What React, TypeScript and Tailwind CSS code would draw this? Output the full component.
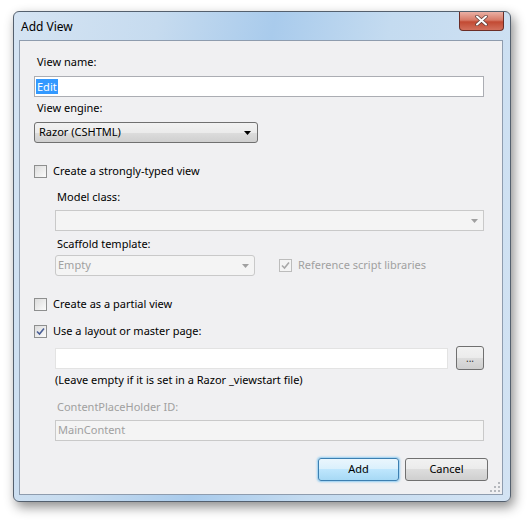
import React from "react";

const font = { fontFamily: '"Noto Sans", "Open Sans", Arial, sans-serif' };

function Checkbox({ checked, disabled }: { checked?: boolean; disabled?: boolean }) {
  return (
    <span
      className={`relative flex h-[13px] w-[13px] shrink-0 items-center justify-center border ${
        disabled ? "border-[#bcbcbc] bg-[#f4f4f4]" : "border-[#8e8f8f] bg-gradient-to-br from-[#dcdcdc] to-[#fbfbfb]"
      }`}
    >
      {checked && (
        <svg width="9" height="9" viewBox="0 0 9 9">
          <path
            d="M1 4.5 L3.5 7 L8 1.5"
            fill="none"
            stroke={disabled ? "#a8a8a8" : "#4a5f97"}
            strokeWidth="1.6"
          />
        </svg>
      )}
    </span>
  );
}

function Arrow({ disabled }: { disabled?: boolean }) {
  return (
    <svg width="7" height="4" viewBox="0 0 7 4" className="shrink-0">
      <path d="M0 0 H7 L3.5 4 Z" fill={disabled ? "#a0a0a0" : "#000"} />
    </svg>
  );
}

function Label({ children, className = "" }: { children: React.ReactNode; className?: string }) {
  return <div className={`h-4 leading-4 text-[11px] ${className}`}>{children}</div>;
}

export default function App() {
  return (
    <div className="h-[521px] w-[528px] bg-white pl-[13px] pt-[11px]" style={font}>
      {/* window frame */}
      <div className="relative flex h-[491px] w-[498px] flex-col rounded-[6px] border border-[#54606e] bg-[linear-gradient(100deg,#d5e4f3_0%,#c6dbef_25%,#a9cbec_45%,#c4dbf0_65%,#d3e3f3_100%)] pb-[6px] pl-[5px] pr-[7px] shadow-[3px_5px_12px_rgba(0,0,0,0.45)]">
        {/* title bar */}
        <div className="flex h-[28px] items-center justify-between">
          <span className="pl-[2px] pt-[2px] text-[12px] text-black">Add View</span>
          <div className="-mr-[1px] -mt-[10px] flex h-[19px] w-[45px] items-center justify-center rounded-b-[4px] border border-t-0 border-[#6b2d26] bg-[linear-gradient(#eab0a5,#d77a67_45%,#c24a33_55%,#d2705c)]">
            <svg width="13" height="11" viewBox="0 0 13 11">
              <path d="M2 1.5 L11 9.5 M11 1.5 L2 9.5" stroke="#5a3a36" strokeWidth="3.4" strokeLinecap="round" />
              <path d="M2 1.5 L11 9.5 M11 1.5 L2 9.5" stroke="#ffffff" strokeWidth="2" strokeLinecap="round" />
            </svg>
          </div>
        </div>

        {/* client area */}
        <div className="relative flex flex-1 flex-col border border-[#8e9cae] bg-[#f0f0f2] pl-[14px] pr-[18px] text-black">
          <Label className="mt-[13px] pl-[3px]">View name:</Label>
          <div className="mt-[6px] flex h-[21px] items-center border border-[#abadb3] bg-white pl-[1px]">
            <span className="bg-[#3399ff] px-[1px] text-[11px] leading-[15px] text-white">Edit</span>
          </div>
          <Label className="mt-[3px] pl-[3px]">View engine:</Label>
          <div className="mt-[6px] flex h-[21px] w-[224px] items-center justify-between rounded-[3px] border border-[#707070] bg-[linear-gradient(#f2f2f2,#ebebeb_50%,#dddddd_50%,#cfcfcf)] pl-[4px] pr-[6px] text-[11px]">
            <span>Razor (CSHTML)</span>
            <Arrow />
          </div>

          <div className="mt-[20px] flex h-4 items-center gap-[6px]">
            <Checkbox />
            <span className="text-[11px]">Create a strongly-typed view</span>
          </div>

          <div className="flex flex-col pl-[21px]">
            <Label className="mt-[10px] pl-[2px]">Model class:</Label>
            <div className="mt-[5px] flex h-[21px] items-center justify-end border border-[#c9c9c9] bg-[#f4f4f4] pr-[5px]">
              <Arrow disabled />
            </div>
            <Label className="mt-[5px] pl-[2px]">Scaffold template:</Label>
            <div className="mt-[3px] flex h-[21px] items-center">
              <div className="flex h-[21px] w-[200px] items-center justify-between rounded-[3px] border border-[#c9c9c9] bg-[#f4f4f4] pl-[2px] pr-[5px] text-[11px] text-[#a0a0a0]">
                <span>Empty</span>
                <Arrow disabled />
              </div>
              <div className="ml-[24px] flex items-center gap-[6px]">
                <Checkbox checked disabled />
                <span className="text-[11px] text-[#a0a0a0]">Reference script libraries</span>
              </div>
            </div>
          </div>

          <div className="mt-[20px] flex h-4 items-center gap-[6px]">
            <Checkbox />
            <span className="text-[11px]">Create as a partial view</span>
          </div>
          <div className="mt-[11px] flex h-4 items-center gap-[6px]">
            <Checkbox checked />
            <span className="text-[11px]">Use a layout or master page:</span>
          </div>

          <div className="flex flex-col pl-[21px]">
            <div className="mt-[7px] flex h-[24px] items-center gap-[8px]">
              <div className="h-[21px] flex-1 border border-[#e3e3e3] bg-white" />
              <div className="flex h-[24px] w-[28px] items-center justify-center rounded-[3px] border border-[#707070] bg-[linear-gradient(#f2f2f2,#ebebeb_50%,#dddddd_50%,#cfcfcf)] text-[10px] leading-none text-[#333]">
                ...
              </div>
            </div>
            <Label className="mt-[2px]">(Leave empty if it is set in a Razor _viewstart file)</Label>
            <Label className="mt-[11px] pl-[2px] text-[#a0a0a0]">ContentPlaceHolder ID:</Label>
            <div className="mt-[5px] flex h-[21px] items-center border border-[#c9c9c9] bg-[#f4f4f4] pl-[2px] text-[11px] text-[#a0a0a0]">
              MainContent
            </div>
          </div>

          <div className="mt-[17px] flex justify-end gap-[6px]">
            <div className="flex h-[23px] w-[81px] items-center justify-center rounded-[3px] border border-[#3c7fb1] bg-[linear-gradient(#eaf6fd,#d9f0fc_50%,#bee6fd_50%,#a7d9f5)] text-[11px] shadow-[0_0_2px_1px_rgba(80,180,240,0.6)]">
              Add
            </div>
            <div className="-mr-[4px] flex h-[23px] w-[83px] items-center justify-center rounded-[3px] border border-[#707070] bg-[linear-gradient(#f2f2f2,#ebebeb_50%,#dddddd_50%,#cfcfcf)] text-[11px]">
              Cancel
            </div>
          </div>

          {/* resize grip */}
          <svg className="absolute bottom-[2px] right-[2px]" width="10" height="10" viewBox="0 0 10 10">
            {[
              [8, 0],
              [8, 4],
              [4, 4],
              [8, 8],
              [4, 8],
              [0, 8],
            ].map(([x, y], i) => (
              <rect key={i} x={x} y={y} width="2" height="2" fill="#b5b8bd" />
            ))}
          </svg>
        </div>
      </div>
    </div>
  );
}
